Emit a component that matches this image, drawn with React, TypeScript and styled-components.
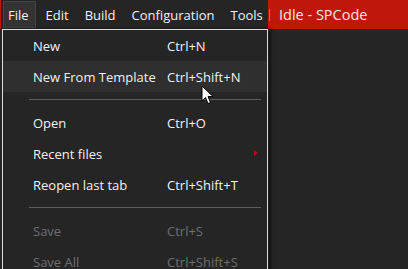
import React from "react";
import styled, { createGlobalStyle } from "styled-components";

const Global = createGlobalStyle`
  html, body { margin: 0; padding: 0; background: #252526; }
  body { font-family: "Open Sans", "Noto Sans", sans-serif; }
`;

const Frame = styled.div`
  position: relative;
  width: 408px;
  height: 269px;
  overflow: hidden;
  background: #252526;
  font-family: "Open Sans", "Noto Sans", sans-serif;
  font-size: 13px;
  color: #f1f1f1;
`;

const Header = styled.div`
  display: flex;
  height: 29px;
`;

const MenuBar = styled.div`
  display: flex;
  align-items: stretch;
  flex: 0 0 268px;
  width: 268px;
  min-width: 0;
  overflow: hidden;
  height: 29px;
  box-sizing: border-box;
  border-left: 1px solid #c1170b;
  padding: 1px 0 1px 2px;
  background: #252526;
`;

const BarItem = styled.div<{ $open?: boolean }>`
  display: flex;
  align-items: center;
  box-sizing: border-box;
  padding: ${(p) => (p.$open ? "0 6px 0 4px" : "0 8px")};
  margin-right: ${(p) => (p.$open ? "2px" : "0")};
  background: ${(p) => (p.$open ? "#333334" : "transparent")};
  border: ${(p) => (p.$open ? "1px solid #444446" : "none")};
  color: #f1f1f1;
  white-space: nowrap;
`;

const TitleBar = styled.div`
  flex: 1;
  display: flex;
  align-items: center;
  background: #c1170b;
  color: #f6e6e4;
  font-size: 14.5px;
`;

const TitleSep = styled.div`
  width: 1px;
  height: 12px;
  background: #d9574c;
  margin: 0 9px 0 1px;
`;

const Menu = styled.div`
  position: absolute;
  left: 2px;
  top: 29px;
  width: 266px;
  height: 260px;
  box-sizing: border-box;
  border: 1px solid #dcdcdc;
  background: #252526;
  box-shadow: 3px 0 3px rgba(0, 0, 0, 0.5), 1px 0 0 #3a3a3a;
`;

const Row = styled.div<{ $hover?: boolean; $disabled?: boolean }>`
  position: relative;
  display: grid;
  grid-template-columns: 134px 1fr;
  align-items: center;
  height: 31px;
  padding-left: 30px;
  background: ${(p) => (p.$hover ? "#2f2f30" : "transparent")};
  color: ${(p) => (p.$disabled ? "#6e6e6e" : "#f1f1f1")};
  white-space: nowrap;
`;

const Shortcut = styled.span``;

const Arrow = styled.span`
  position: absolute;
  right: 9px;
  top: 12px;
  width: 0;
  height: 0;
  border-top: 3px solid transparent;
  border-bottom: 3px solid transparent;
  border-left: 4px solid #b01010;
`;

const Separator = styled.div`
  height: 1px;
  margin: 7px 6px 7px 26px;
  background: #5d5d5d;
`;

const Cursor = styled.svg`
  position: absolute;
  left: 201px;
  top: 85px;
`;

type Item = { label: string; shortcut?: string; hover?: boolean; disabled?: boolean; sub?: boolean } | "sep";

const items: Item[] = [
  { label: "New", shortcut: "Ctrl+N" },
  { label: "New From Template", shortcut: "Ctrl+Shift+N", hover: true },
  "sep",
  { label: "Open", shortcut: "Ctrl+O" },
  { label: "Recent files", sub: true },
  { label: "Reopen last tab", shortcut: "Ctrl+Shift+T" },
  "sep",
  { label: "Save", shortcut: "Ctrl+S", disabled: true },
  { label: "Save All", shortcut: "Ctrl+Shift+S", disabled: true },
];

export default function App() {
  return (
    <>
      <Global />
      <Frame>
        <Header>
          <MenuBar>
            <BarItem $open>File</BarItem>
            <BarItem>Edit</BarItem>
            <BarItem>Build</BarItem>
            <BarItem>Configuration</BarItem>
            <BarItem>Tools</BarItem>
          </MenuBar>
          <TitleBar>
            <TitleSep />
            Idle - SPCode
          </TitleBar>
        </Header>
        <Menu>
          {items.map((it, i) =>
            it === "sep" ? (
              <Separator key={i} />
            ) : (
              <Row key={i} $hover={it.hover} $disabled={it.disabled}>
                <span>{it.label}</span>
                <Shortcut>{it.shortcut ?? ""}</Shortcut>
                {it.sub && <Arrow />}
              </Row>
            )
          )}
        </Menu>
        <Cursor width="14" height="20" viewBox="0 0 14 20">
          <path d="M1 1 L1 16 L4.5 12.5 L7 18.5 L9.5 17.5 L7 11.5 L12 11.5 Z" fill="#ffffff" stroke="#000000" strokeWidth="1" strokeLinejoin="miter" />
        </Cursor>
      </Frame>
    </>
  );
}
